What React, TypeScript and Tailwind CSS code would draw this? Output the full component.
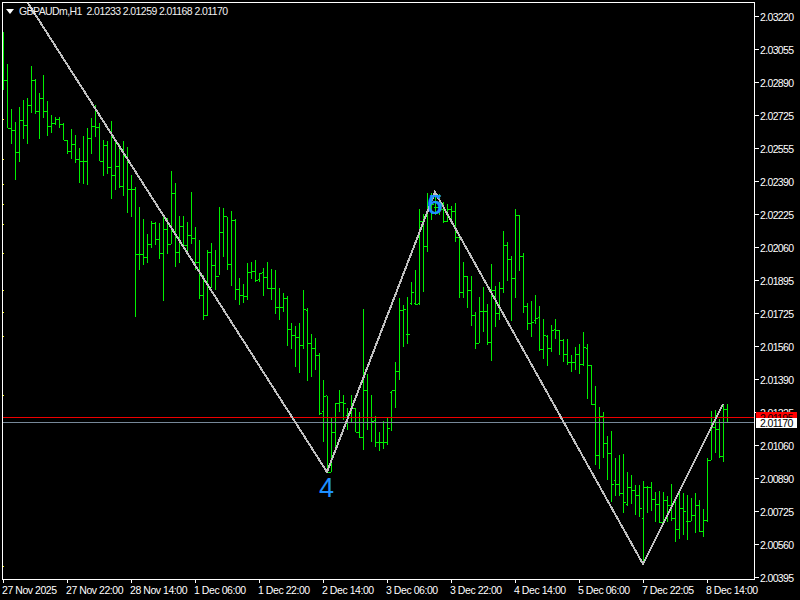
const font = "font-['Liberation_Sans',Arial,sans-serif] text-[10.5px] tracking-[-0.65px] leading-[12px] whitespace-nowrap";
const waveLabel = "absolute font-['Liberation_Sans',Arial,sans-serif] text-[27px] tracking-normal leading-[30px] text-[#1e90ff]";

// x, high, low, open, close (page pixels)
const BARS: number[][] = [
  [3, 32, 90, 80, 80], [7, 64, 128, 80, 128], [11, 109, 144, 128, 130], [15, 122, 180, 130, 152],
  [19, 107, 162, 152, 120], [23, 100, 139, 120, 125], [27, 98, 144, 125, 105], [31, 66, 113, 105, 80],
  [35, 79, 114, 80, 111], [39, 93, 139, 111, 98], [43, 75, 118, 98, 111], [47, 101, 136, 111, 126],
  [51, 115, 133, 126, 123], [55, 117, 125, 123, 119], [59, 117, 128, 119, 124], [63, 123, 140, 124, 140],
  [67, 140, 154, 140, 151], [71, 129, 159, 151, 144], [75, 135, 163, 144, 159], [79, 148, 183, 159, 161],
  [83, 136, 184, 161, 161], [87, 128, 185, 161, 138], [91, 118, 154, 138, 126], [95, 105, 137, 126, 127],
  [99, 123, 161, 127, 161], [103, 140, 176, 161, 145], [107, 141, 174, 145, 167], [111, 121, 199, 167, 175],
  [115, 140, 190, 175, 166], [119, 144, 188, 166, 186], [123, 141, 196, 186, 156], [127, 147, 213, 156, 189],
  [131, 175, 217, 189, 189], [135, 187, 317, 189, 254], [139, 207, 270, 254, 254], [143, 219, 265, 254, 257],
  [147, 234, 263, 257, 244], [151, 221, 248, 244, 223], [155, 222, 245, 223, 239], [159, 223, 259, 239, 253],
  [163, 217, 301, 253, 229], [167, 218, 254, 229, 244], [171, 171, 244, 244, 193], [175, 183, 267, 193, 252],
  [179, 216, 263, 252, 226], [183, 216, 246, 226, 245], [187, 222, 255, 245, 235], [191, 192, 244, 235, 238],
  [195, 227, 270, 238, 262], [199, 240, 299, 262, 295], [203, 275, 320, 295, 315], [207, 250, 316, 315, 252],
  [211, 243, 288, 252, 265], [215, 250, 290, 265, 276], [219, 207, 275, 276, 232], [223, 208, 257, 232, 216],
  [227, 217, 270, 216, 264], [231, 211, 286, 264, 220], [235, 219, 300, 220, 289], [239, 278, 305, 289, 295],
  [243, 284, 303, 295, 296], [247, 263, 300, 296, 272], [251, 262, 279, 272, 271], [255, 260, 282, 271, 280],
  [259, 273, 282, 279, 273], [263, 268, 296, 272, 277], [267, 262, 289, 277, 288], [271, 269, 300, 288, 288],
  [275, 270, 314, 288, 307], [279, 288, 320, 307, 307], [283, 293, 312, 307, 298], [287, 296, 346, 298, 329],
  [291, 323, 349, 329, 335], [295, 326, 367, 335, 337], [299, 323, 373, 337, 345], [303, 290, 349, 345, 309],
  [307, 308, 381, 310, 343], [311, 334, 377, 343, 348], [315, 338, 370, 348, 355], [319, 353, 415, 355, 413],
  [323, 380, 442, 411, 396], [327, 396, 472, 395, 472], [331, 417, 472, 472, 432], [335, 403, 450, 432, 403],
  [339, 390, 412, 403, 402], [343, 395, 420, 402, 403], [347, 408, 430, 415, 413], [351, 395, 422, 413, 408],
  [355, 408, 432, 408, 432], [359, 412, 438, 432, 437], [363, 309, 450, 437, 390], [367, 374, 430, 390, 422],
  [371, 395, 442, 422, 421], [375, 416, 447, 420, 442], [379, 432, 451, 442, 442], [383, 421, 449, 442, 442],
  [387, 418, 445, 442, 428], [391, 391, 431, 392, 390], [395, 362, 408, 390, 371], [399, 298, 380, 371, 310],
  [403, 305, 347, 310, 309], [407, 297, 344, 334, 334], [411, 282, 305, 303, 292], [415, 270, 305, 303, 304],
  [419, 209, 305, 303, 221], [423, 214, 292, 221, 246], [427, 193, 252, 246, 206], [431, 193, 220, 206, 204],
  [435, 193, 215, 207, 207], [439, 194, 215, 207, 209], [443, 202, 223, 209, 221], [447, 204, 222, 221, 209],
  [451, 206, 221, 209, 211], [455, 203, 242, 211, 237], [459, 236, 298, 237, 292], [463, 262, 298, 292, 276],
  [467, 276, 308, 276, 290], [471, 276, 326, 290, 315], [475, 312, 349, 315, 343], [479, 297, 343, 343, 311],
  [483, 287, 332, 311, 311], [487, 304, 345, 311, 342], [491, 264, 361, 342, 290], [495, 286, 327, 290, 313],
  [499, 282, 320, 313, 288], [503, 231, 293, 288, 245], [507, 242, 281, 245, 259], [511, 256, 321, 259, 278],
  [515, 209, 298, 278, 215], [519, 215, 271, 215, 256], [523, 253, 313, 256, 306], [527, 303, 330, 306, 323],
  [531, 301, 337, 323, 322], [535, 295, 324, 320, 318], [539, 306, 351, 317, 349], [543, 319, 359, 349, 335],
  [547, 335, 366, 336, 348], [551, 325, 352, 348, 330], [555, 319, 339, 329, 330], [559, 330, 355, 330, 340],
  [563, 339, 362, 340, 354], [567, 339, 365, 354, 362], [571, 355, 372, 362, 362], [575, 347, 370, 362, 354],
  [579, 344, 374, 354, 364], [583, 332, 366, 364, 347], [587, 344, 399, 348, 365], [591, 365, 405, 365, 404],
  [595, 386, 465, 404, 455], [599, 407, 469, 455, 416], [603, 412, 458, 416, 443], [607, 436, 480, 443, 453],
  [611, 431, 502, 453, 484], [615, 458, 496, 480, 484], [619, 455, 496, 484, 493], [623, 454, 513, 493, 502],
  [627, 472, 506, 504, 487], [631, 475, 504, 487, 490], [635, 485, 515, 490, 495], [639, 485, 517, 495, 508],
  [643, 481, 564, 518, 487], [647, 486, 513, 487, 487], [651, 482, 511, 487, 499], [655, 492, 522, 499, 504],
  [659, 491, 523, 504, 522], [663, 492, 523, 522, 500], [667, 496, 522, 500, 505], [671, 484, 521, 505, 518],
  [675, 497, 542, 518, 529], [679, 490, 539, 529, 508], [683, 493, 535, 508, 511], [687, 495, 540, 521, 521],
  [691, 498, 521, 521, 515], [695, 493, 533, 515, 505], [699, 500, 532, 505, 531], [703, 509, 537, 531, 520],
  [707, 458, 522, 520, 460], [711, 411, 460, 460, 427], [715, 410, 453, 427, 429], [719, 419, 458, 429, 456],
  [723, 404, 462, 456, 409], [727, 404, 422, 409, 422],
];

const YELLOW_DOTS = [119, 159, 184, 204, 224, 253, 290, 312, 336, 395, 566];

const PRICES = [
  "2.03220", "2.03055", "2.02890", "2.02725", "2.02555", "2.02390", "2.02225", "2.02060", "2.01895",
  "2.01725", "2.01560", "2.01390", "2.01225", "2.01060", "2.00890", "2.00725", "2.00560", "2.00395",
];

const TIMES = [
  "27 Nov 2025", "27 Nov 22:00", "28 Nov 14:00", "1 Dec 06:00", "1 Dec 22:00", "2 Dec 14:00",
  "3 Dec 06:00", "3 Dec 22:00", "4 Dec 14:00", "5 Dec 06:00", "7 Dec 22:05", "8 Dec 14:00",
];

function Chart() {
  return (
    <svg viewBox="3 3 751 576" className="block w-[751px] h-[576px]" shapeRendering="crispEdges">
      {YELLOW_DOTS.map((y) => (
        <rect key={y} x={3} y={y} width={1} height={1} fill="#ffff00" />
      ))}
      {BARS.map(([x, high, low, open, close]) => (
        <g key={x} fill="#00f000">
          <rect x={x} y={high} width={1} height={low - high} />
          <rect x={x - 1} y={open} width={1} height={1} />
          <rect x={x + 1} y={close} width={2} height={1} />
        </g>
      ))}
      <rect x={3} y={417} width={751} height={1} fill="#ee0000" />
      <rect x={3} y={422} width={751} height={1} fill="#778899" />
      <polyline points="26,0 327,472 435,192 643,564 723,404" fill="none" stroke="#c0c0c0" strokeWidth={2} />
    </svg>
  );
}

export default function App() {
  return (
    <div className={`relative w-[800px] h-[600px] overflow-hidden bg-black text-white ${font}`}>
      <div className="flex h-[580px] pt-[2px] pl-[2px]">
        <div className="relative w-[753px] h-[578px] border border-white">
          <Chart />

          {/* Legend */}
          <div className="absolute left-[3px] top-[2px] flex items-center h-[12px]">
            <svg width="8" height="5" viewBox="0 0 8 5" className="mr-[5px]">
              <polygon points="0,0 8,0 4,5" fill="#ffffff" />
            </svg>
            <span className="text-[#f0f0f0] tracking-[-0.58px]">GBPAUDm,H1&nbsp;&nbsp;2.01233 2.01259 2.01168 2.01170</span>
          </div>

          {/* Wave labels */}
          <span className={`${waveLabel} left-[316px] top-[470px]`}>4</span>
          <span className={`${waveLabel} left-[425px] top-[187px]`}>5</span>
          <span className={`${waveLabel} left-[424px] top-[187px]`}>6</span>
        </div>

        {/* Price axis */}
        <div className="flex flex-col -mt-[2px]">
          {PRICES.map((p) => (
            <div key={p} className="flex items-center h-[33px] shrink-0">
              <div className="w-[4px] h-px bg-white mr-[1px]" />
              <span>{p}</span>
            </div>
          ))}
        </div>
      </div>

      {/* Time axis */}
      <div className="flex pl-[3px]">
        {TIMES.map((t) => (
          <div key={t} className="w-[64px] shrink-0">
            <div className="w-px h-[3px] bg-white" />
            <div className="-ml-px mt-[1px] tracking-[-0.45px]">{t}</div>
          </div>
        ))}
      </div>

      {/* Current price tags */}
      <div className="absolute left-[756px] top-[412px] w-[41px] h-[6px] bg-[#ff0000] text-black overflow-hidden">
        <span className="block pl-[4px]">2.01195</span>
      </div>
      <div className="absolute left-[756px] top-[418px] w-[41px] h-[10px] bg-white text-black pl-[4px] leading-[10px]">2.01170</div>
    </div>
  );
}
